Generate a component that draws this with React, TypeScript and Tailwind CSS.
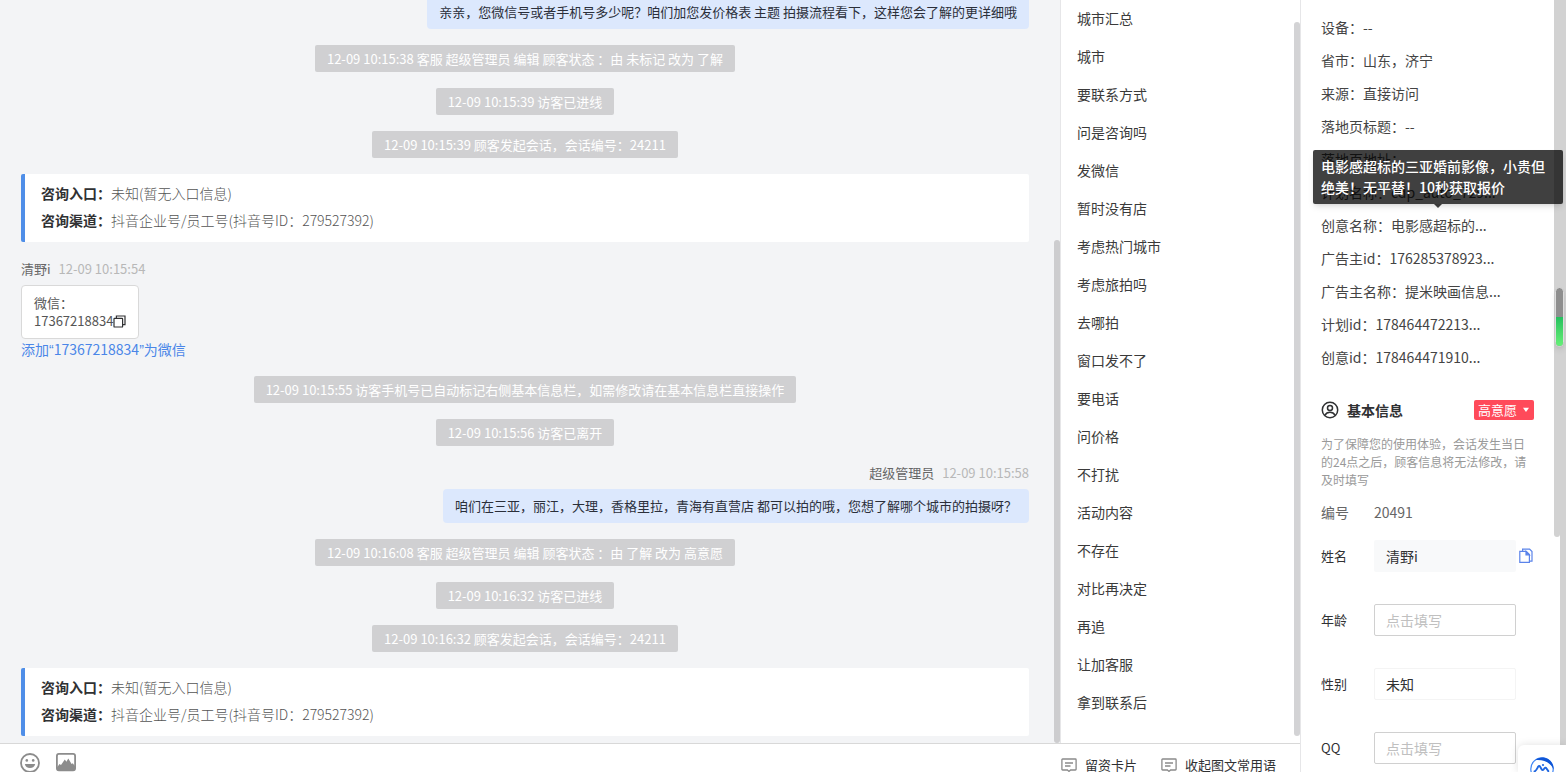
import { useState } from "react";

const phrases = [
  "城市汇总", "城市", "要联系方式", "问是咨询吗", "发微信", "暂时没有店", "考虑热门城市",
  "考虑旅拍吗", "去哪拍", "窗口发不了", "要电话", "问价格", "不打扰", "活动内容",
  "不存在", "对比再决定", "再追", "让加客服", "拿到联系后",
];

const visitorInfo = [
  { label: "设备", value: "--" },
  { label: "省市", value: "山东，济宁" },
  { label: "来源", value: "直接访问" },
  { label: "落地页标题", value: "--" },
  { label: "落地页地址", value: "" },
  { label: "计划名称", value: "cdp_auto_729..." },
  { label: "创意名称", value: "电影感超标的...", tip: "电影感超标的三亚婚前影像，小贵但绝美！无平替！10秒获取报价" },
  { label: "广告主id", value: "176285378923..." },
  { label: "广告主名称", value: "提米映画信息..." },
  { label: "计划id", value: "178464472213..." },
  { label: "创意id", value: "178464471910..." },
];

function Notice({ children }: { children: React.ReactNode }) {
  return (
    <div className="self-center shrink-0 rounded-xs bg-[#d0d0d2] px-3 text-[13px] leading-[27px] whitespace-nowrap text-white">
      {children}
    </div>
  );
}

function EntryCard() {
  return (
    <div className="shrink-0 rounded-xs border-l-4 border-[#4f8ee8] bg-white pt-1.5 pb-2 pl-4 text-[14px] leading-[27px]">
      <div><span className="font-bold text-[#303133]">咨询入口：</span><span className="font-light text-[#555]">未知(暂无入口信息)</span></div>
      <div><span className="font-bold text-[#303133]">咨询渠道：</span><span className="font-light text-[#555]">抖音企业号/员工号(抖音号ID：279527392)</span></div>
    </div>
  );
}

function Bubble({ children }: { children: React.ReactNode }) {
  return (
    <div className="self-end shrink-0 rounded-sm bg-[#dce8fd] px-3 text-[13px] leading-[34px] text-[#2b2f3a]">
      {children}
    </div>
  );
}

function CopyIcon() {
  return (
    <svg width="13" height="13" viewBox="0 0 13 13" fill="none" stroke="#303133" strokeWidth="1.2">
      <rect x="1" y="3.4" width="8.6" height="8.6" rx="0.6" />
      <path d="M3.4 3.2V1h8.6v8.6H9.8" />
    </svg>
  );
}

function CardIcon() {
  return (
    <svg width="16" height="14" viewBox="0 0 16 14" fill="none" stroke="#8a8a8a" strokeWidth="1.3">
      <path d="M1.6 1h12.8c.4 0 .7.3.7.7v9.6c0 .4-.3.7-.7.7H9.6L8 13.4 6.400 12H1.600c-.4 0-.7-.3-.7-.7V1.700c0-.4.3-.7.7-.7z" />
      <path d="M4 5h8M4 8h5.500" />
    </svg>
  );
}

function Chat() {
  return (
    <section className="relative flex min-w-0 flex-1 flex-col justify-end gap-4 overflow-hidden bg-[#f3f4f6] pr-[31px] pb-[7px] pl-[21px]">
      <Bubble>亲亲，您微信号或者手机号多少呢？咱们加您发价格表 主题 拍摄流程看下，这样您会了解的更详细哦</Bubble>
      <Notice>12-09 10:15:38 客服 超级管理员 编辑 顾客状态 ：由 未标记 改为 了解</Notice>
      <Notice>12-09 10:15:39 访客已进线</Notice>
      <Notice>12-09 10:15:39 顾客发起会话，会话编号：24211</Notice>
      <EntryCard />
      <div className="flex shrink-0 flex-col items-start">
        <div className="mb-[5px] flex gap-2 text-[13px] leading-[22px]">
          <span className="text-[#666]">清野i</span>
          <span className="text-[#b8b8b8]">12-09 10:15:54</span>
        </div>
        <div className="rounded-sm border border-[#d9d9d9] bg-white px-3 py-2 text-[13px] leading-[18px] text-[#555]">
          <div>微信：</div>
          <div className="flex items-center">
            17367218834
            <button type="button" aria-label="复制"><CopyIcon /></button>
          </div>
        </div>
        <a href="#" className="text-[14px] leading-5 text-[#4a86e8]">
          添加<span className="font-['Liberation_Sans']">“</span>17367218834<span className="font-['Liberation_Sans']">”</span>为微信
        </a>
      </div>
      <Notice>12-09 10:15:55 访客手机号已自动标记右侧基本信息栏，如需修改请在基本信息栏直接操作</Notice>
      <Notice>12-09 10:15:56 访客已离开</Notice>
      <div className="flex shrink-0 flex-col items-end">
        <div className="mb-[5px] flex gap-2 text-[13px] leading-[22px]">
          <span className="text-[#666]">超级管理员</span>
          <span className="text-[#b8b8b8]">12-09 10:15:58</span>
        </div>
        <Bubble>咱们在三亚，丽江，大理，香格里拉，青海有直营店 都可以拍的哦，您想了解哪个城市的拍摄呀？</Bubble>
      </div>
      <Notice>12-09 10:16:08 客服 超级管理员 编辑 顾客状态 ：由 了解 改为 高意愿</Notice>
      <Notice>12-09 10:16:32 访客已进线</Notice>
      <Notice>12-09 10:16:32 顾客发起会话，会话编号：24211</Notice>
      <EntryCard />
      {/* scroll thumb */}
      <div className="absolute top-[240px] right-0 bottom-0 w-1.5 rounded-full bg-[#cdcdcf]" />
    </section>
  );
}

function Phrases() {
  return (
    <nav className="relative w-60 shrink-0 overflow-hidden border-l border-[#e6e6e8] bg-white">
      <ul className="-mt-px px-4 text-[14px] leading-[38px] text-[#3a3a3a]">
        {phrases.map((p) => (
          <li key={p}><button type="button">{p}</button></li>
        ))}
      </ul>
      <div className="absolute top-[22px] right-0 bottom-[7px] w-1.5 rounded-full bg-[#d3d3d5]" />
    </nav>
  );
}

function Toolbar() {
  return (
    <footer className="flex h-[29px] shrink-0 items-start justify-between overflow-hidden border-t border-[#d8d8d8] bg-white pr-6 pl-5">
      <div className="flex gap-4 pt-[9px]">
        <button type="button" aria-label="表情">
          <svg width="20" height="20" viewBox="0 0 20 20">
            <circle cx="10" cy="10" r="9" fill="none" stroke="#8c8c8c" strokeWidth="1.8" />
            <circle cx="6.800" cy="7.400" r="1.300" fill="#8c8c8c" />
            <circle cx="13.200" cy="7.400" r="1.300" fill="#8c8c8c" />
            <path d="M4.800 11h10.400a5.300 5 0 0 1-10.400 0z" fill="#8c8c8c" />
          </svg>
        </button>
        <button type="button" aria-label="图片">
          <svg width="20" height="20" viewBox="0 0 20 20">
            <rect x="0.900" y="0.900" width="18.200" height="16.400" rx="2" fill="none" stroke="#8c8c8c" strokeWidth="1.800" />
            <path d="M1 14.500 3.500 11l1.500 1 3.800-5.500 1.600 2.300 1.900-3.300 3.300 5.500 1.200-.8 2.200 3v3c0 .6-.4 1-1 1H2c-.6 0-1-.4-1-1z" fill="#8c8c8c" />
          </svg>
        </button>
      </div>
      <div className="flex gap-6 pt-[11px] text-[13px] leading-5 text-[#303133]">
        <button type="button" className="flex items-center gap-2"><CardIcon />留资卡片</button>
        <button type="button" className="flex items-center gap-2"><CardIcon />收起图文常用语</button>
      </div>
    </footer>
  );
}

function Tooltip({ text }: { text: string }) {
  return (
    <div role="tooltip" className="absolute -left-2 bottom-full z-20 mb-[5px] w-[250px] rounded-xs bg-black/75 px-2 py-1.5 text-[14px] leading-[21px] font-medium whitespace-normal text-white shadow-md">
      {text}
      <span className="absolute top-full left-1/2 -translate-x-1/2 border-x-4 border-t-4 border-x-transparent border-t-black/75" />
    </div>
  );
}

function Sidebar() {
  const [name, setName] = useState("清野i");
  const [age, setAge] = useState("");
  const [gender, setGender] = useState("未知");
  const [qq, setQq] = useState("");

  return (
    <aside className="relative w-[266px] shrink-0 border-l border-[#e6e6e8] bg-white">
      <div className="h-full overflow-hidden pt-[11px] pr-8 pl-5">
        <dl className="text-[14px] leading-[33px] text-[#444]">
          {visitorInfo.map((v) => (
            <div key={v.label} className="relative flex whitespace-nowrap">
              <dt>{v.label}：</dt>
              <dd>{v.value}</dd>
              {v.tip ? <Tooltip text={v.tip} /> : ""}
            </div>
          ))}
        </dl>
        <div className="mt-[26px] flex h-5 items-center">
          <svg width="18" height="18" viewBox="0 0 18 18" fill="none" stroke="#303133" strokeWidth="1.5">
            <circle cx="9" cy="9" r="7.700" />
            <circle cx="9" cy="6.900" r="2.500" />
            <path d="M3.800 14.300c1.200-2.100 2.800-3 5.200-3s4 .9 5.200 3" />
          </svg>
          <h2 className="ml-2 flex-1 text-[14px] font-bold text-[#303133]">基本信息</h2>
          <button type="button" className="flex h-5 items-center gap-[5px] rounded-xs bg-[#ff4a5a] px-1 text-[13px] text-white">
            高意愿
            <svg width="8" height="6" viewBox="0 0 8 6" fill="#fff"><path d="M1 .800h6L4 5z" /></svg>
          </button>
        </div>
        <p className="mt-[15px] text-[12px] leading-[18px] text-[#999]">
          为了保障您的使用体验，会话发生当日的24点之后，顾客信息将无法修改，请及时填写
        </p>
        <div className="mt-[11px] mb-4 grid grid-cols-[53px_1fr] text-[14px] leading-6 text-[#666]">
          <span>编号</span>
          <span>20491</span>
        </div>
        <form className="flex flex-col gap-8 text-[14px] text-[#303133]">
          <div className="flex h-8 items-center">
            <label htmlFor="name" className="w-[53px] text-[13px]">姓名</label>
            <input id="name" value={name} onChange={(e) => setName(e.target.value)} className="h-8 w-[142px] rounded-xs bg-[#f8f9fa] px-3" />
            <button type="button" aria-label="复制姓名" className="ml-[3px]">
              <svg width="14" height="16" viewBox="0 0 14 16" fill="none" stroke="#5b84ea" strokeWidth="1.200">
                <path d="M3.600 3.200V1.200h7l2.400 2.400v9.600h-2.400" />
                <path d="M.8 3.400h6.400l3.200 3.200v7.800H.8z" />
                <path d="M7 3.400v3.400h3.400z" fill="#5b84ea" />
              </svg>
            </button>
          </div>
          <div className="flex h-8 items-center">
            <label htmlFor="age" className="w-[53px] text-[13px]">年龄</label>
            <input id="age" value={age} onChange={(e) => setAge(e.target.value)} placeholder="点击填写" className="h-8 w-[142px] rounded-xs border border-[#d0d0d0] px-[11px] placeholder:text-[#c0c0c0]" />
          </div>
          <div className="flex h-8 items-center">
            <label htmlFor="gender" className="w-[53px] text-[13px]">性别</label>
            <select id="gender" value={gender} onChange={(e) => setGender(e.target.value)} className="h-8 w-[142px] appearance-none rounded-xs border border-[#f4f4f4] px-[11px]">
              <option>未知</option>
              <option>男</option>
              <option>女</option>
            </select>
          </div>
          <div className="flex h-8 items-center">
            <label htmlFor="qq" className="w-[53px] text-[13px]">QQ</label>
            <input id="qq" value={qq} onChange={(e) => setQq(e.target.value)} placeholder="点击填写" className="h-8 w-[142px] rounded-xs border border-[#d0d0d0] px-[11px] placeholder:text-[#c0c0c0]" />
          </div>
        </form>
      </div>

      {/* panel thumb and page scroll bar */}
      <div className="absolute top-0 right-1.5 h-[537px] w-1.5 rounded-b-full bg-[#d2d2d2]" />
      <div className="absolute inset-y-0 right-0 w-1.5 bg-[#d2d2d2]" />
      <div className="absolute top-[287px] right-[2px] flex h-[60px] w-[9px] flex-col overflow-hidden rounded-full border border-[#ddd] bg-[#8e8e8e] shadow-md">
        <div className="mt-auto h-[29px] bg-linear-to-b from-[#22c05e] to-[#66f078]" />
      </div>

      {/* floating assistant */}
      <button type="button" aria-label="助手" className="absolute right-0 bottom-0 flex h-[27px] w-12 items-start justify-center overflow-hidden rounded-tl-md bg-white pt-3 shadow-[0_0_8px_rgba(0,0,0,0.12)]">
        <svg width="24" height="24" viewBox="0 0 24 24" className="shrink-0">
          <circle cx="12" cy="12" r="11.200" fill="#fff" stroke="#3f86f5" strokeWidth="1.200" />
          <path d="M5.500 3C10-1.200 19-.2 22.500 7c.9 2 1.200 3.500 1.200 5.500C21 6 14 2.200 5.500 3z" fill="#0f55d6" />
          <path d="M4.500 14.500c1.500-.5 2.300-2.300 3.600-4.700.7-1.100 1.500-1.100 2.100 0l1.500 2.600c.6.900 1.300.9 1.900.1l.9-1.200c.6-.8 1.400-.7 2 .2l1.800 2.600" fill="none" stroke="#1f66e0" strokeWidth="1.900" strokeLinecap="round" />
          <circle cx="13" cy="8" r="1.100" fill="#1f66e0" />
        </svg>
      </button>
    </aside>
  );
}

export default function App() {
  return (
    <div className="flex h-screen overflow-hidden bg-white font-['Noto_Sans_CJK_SC',sans-serif]" lang="zh-CN">
      <main className="flex min-w-0 flex-1 flex-col">
        <div className="flex min-h-0 flex-1">
          <Chat />
          <Phrases />
        </div>
        <Toolbar />
      </main>
      <Sidebar />
    </div>
  );
}
